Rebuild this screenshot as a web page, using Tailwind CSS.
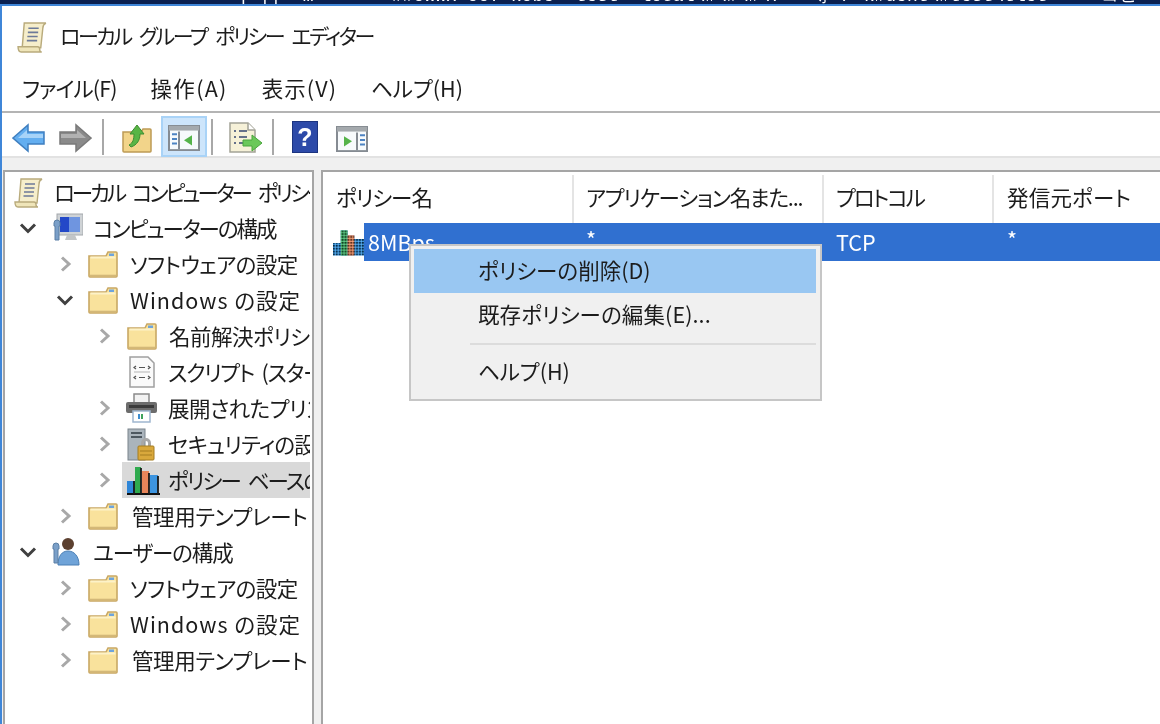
<!DOCTYPE html>
<html lang="ja">
<head>
<meta charset="utf-8">
<script src="https://cdn.jsdelivr.net/npm/@tailwindcss/browser@4"></script>
<title>ローカル グループ ポリシー エディター</title>
</head>
<body class="m-0">
<svg class="absolute w-0 h-0" aria-hidden="true">
  <defs>
    <symbol id="folder" viewBox="0 0 30 28">
      <path d="M1 6h17l2-4h8a1 1 0 0 1 1 1v23a1 1 0 0 1-1 1H2a1 1 0 0 1-1-1z" fill="#f9e29c" stroke="#c9a864" stroke-width="1.6"/>
      <path d="M2.500 7.500h25" stroke="#fdf2c8" stroke-width="2"/>
      <rect x="21" y="3.500" width="5" height="2.500" fill="#6fa4dc"/>
      <path d="M2 25.500h26" stroke="#d3b878" stroke-width="1.600"/>
    </symbol>
    <symbol id="open" viewBox="0 0 20 20"><path d="M7 3.500l7 6.500-7 6.500" fill="none" stroke="#a8a8a8" stroke-width="3"/></symbol>
    <symbol id="down" viewBox="0 0 20 20"><path d="M3 6.500l7 7 7-7" fill="none" stroke="#404040" stroke-width="3"/></symbol>
    <symbol id="scroll" viewBox="0 0 30 32">
      <path d="M7 3h21c-2 1-3 3-3 5l-2 19H5z" fill="#f6eecb" stroke="#b9ab7c" stroke-width="1.400"/>
      <path d="M1 26h19c1 0 2 1 2 2.500S23 31 24 31H4c-2 0-3-2-3-5z" fill="#efe5b9" stroke="#b9ab7c" stroke-width="1.400"/>
      <path d="M11 8h10M10.500 12h10M10 16h10M9.500 20h10" stroke="#6d7a99" stroke-width="1.500"/>
    </symbol>
    <pattern id="dots" width="3" height="3" patternUnits="userSpaceOnUse"><rect x="0" y="0" width="1.700" height="1.700" fill="#000" opacity=".75"/><rect x="1.700" y="1.700" width="1.300" height="1.300" fill="#fff" opacity=".3"/></pattern>
  </defs>
</svg>

<div class="relative w-[1160px] h-[724px] overflow-hidden bg-white flex flex-col text-[#1c1c1c] font-['Noto_Sans_CJK_JP','Noto_Sans',sans-serif] [font-feature-settings:'palt'] text-[21.500px] blur-[0.6px]">

  <!-- strip of the window behind -->
  <div class="h-[6px] shrink-0 bg-[#0a2050] border-b-2 border-[#3f86d8] overflow-hidden relative text-white font-['Liberation_Mono',monospace] text-[18px] leading-[18px] whitespace-pre">
    <span class="absolute left-[238px] -top-[13px]">| ||  m</span>
    <span class="absolute left-[392px] -top-[13px]">##owwx=oo?=kobe  test  local\#\#\#\?   等 / k#dent\#test\tlet  =  コヒ</span>
  </div>

  <div class="flex-1 min-h-0 flex flex-col border-l-2 border-[#3f86d8]">
    <!-- title -->
    <div class="h-[62px] shrink-0 flex items-center pl-[15px] gap-[12px]">
      <svg class="w-[31px] h-[33px] -mt-[1px]"><use href="#scroll"/></svg>
      <span class="whitespace-nowrap text-[21px] -mt-[3px] tracking-[-2.400px] [word-spacing:6px]">ローカル グループ ポリシー エディター</span>
    </div>
    <!-- menu -->
    <div class="h-[43px] shrink-0 flex items-center pl-[20px] gap-[34px] border-b-2 border-[#b4b4b4] box-content">
      <span class="whitespace-nowrap -mt-[2px] tracking-[-0.900px]">ファイル(F)</span>
      <span class="whitespace-nowrap -mt-[2px] tracking-[1.300px]">操作(A)</span>
      <span class="whitespace-nowrap -mt-[2px] tracking-[1.100px]">表示(V)</span>
      <span class="whitespace-nowrap -mt-[2px]">ヘルプ(H)</span>
    </div>
    <!-- toolbar -->
    <div class="h-[45px] shrink-0 flex items-center border-b-2 border-[#e2e2e2] pl-[10px] pt-[4px]">
      <svg class="w-[34px] h-[30px] mt-[3px]" viewBox="0 0 34 30"><path d="M1 15L16 2v7h16v12H16v7z" fill="#63aef0" stroke="#3f7fc0" stroke-width="1.500"/><path d="M6 15L15 7v4h16v4H6z" fill="#a7d3f8"/></svg>
      <svg class="w-[34px] h-[30px] ml-[12px] mt-[3px]" viewBox="0 0 34 30"><path d="M33 15L18 2v7H2v12h16v7z" fill="#8a8a8a" stroke="#7a7a7a" stroke-width="1.500"/><path d="M28 15L19 7v4H3v4h25z" fill="#b2b2b2"/></svg>
      <div class="w-[2px] h-[36px] bg-[#a8a8a8] ml-[10px] mt-[1px]"></div>
      <svg class="w-[30px] h-[32px] ml-[18px] mt-[2px]" viewBox="0 0 30 32"><path d="M1 10h18l2-3h7a1 1 0 0 1 1 1v21a1 1 0 0 1-1 1H2a1 1 0 0 1-1-1z" fill="#f2d48a" stroke="#bd9a55" stroke-width="1.500"/><path d="M7 23c4-2 5-6 5-11H8l7-9 7 9h-4c0 6-3 11-9 13z" fill="#58b545" stroke="#3d8d30" stroke-width="1"/></svg>
      <div class="ml-[9px] w-[46px] h-[41px] bg-[#cde5fb] border-2 border-[#a9d3f7] flex items-center justify-center">
        <svg class="w-[32px] h-[26px] mt-[3px]" viewBox="0 0 32 28" preserveAspectRatio="none"><rect x="1" y="1" width="30" height="26" fill="#f7fafc" stroke="#858b92" stroke-width="2"/><rect x="1" y="1" width="30" height="5" fill="#a4a9ad"/><path d="M11 7v19" stroke="#858b92" stroke-width="2"/><path d="M4 10h5M4 15h5M4 20h5" stroke="#4d83c2" stroke-width="2.200"/><path d="M24 11v11l-8-5.500z" fill="#55b34a"/></svg>
      </div>
      <div class="w-[2px] h-[36px] bg-[#a8a8a8] ml-[4px] mt-[1px]"></div>
      <svg class="w-[34px] h-[32px] ml-[16px] mt-[2px]" viewBox="0 0 34 32"><path d="M1 1h18l7 7v22H1z" fill="#f6f1d8" stroke="#a3a396" stroke-width="1.500"/><path d="M19 1v7h7" fill="#fff" stroke="#a3a396" stroke-width="1.500"/><path d="M5 9h2M10 9h8M5 15h2M10 15h8M5 21h2M10 21h6" stroke="#65708a" stroke-width="1.800"/><path d="M14 18h9v-5l10 8-10 8v-5h-9z" fill="#6bc85a" stroke="#4aa53c" stroke-width="1"/></svg>
      <div class="w-[2px] h-[36px] bg-[#a8a8a8] ml-[9px] mt-[1px]"></div>
      <div class="ml-[18px] w-[26px] h-[32px] mt-[1px] bg-[#2d4aa8] border border-[#1c3480] flex items-center justify-center text-white text-[25px] leading-none font-bold font-['Liberation_Sans',sans-serif]">?</div>
      <svg class="w-[32px] h-[26px] ml-[18px] mt-[4px]" viewBox="0 0 32 28" preserveAspectRatio="none"><rect x="1" y="1" width="30" height="26" fill="#f7fafc" stroke="#858b92" stroke-width="2"/><rect x="1" y="1" width="30" height="5" fill="#a4a9ad"/><path d="M21 7v19" stroke="#858b92" stroke-width="2"/><path d="M24 10h5M24 15h5M24 20h5" stroke="#4d83c2" stroke-width="2.200"/><path d="M8 11v11l8-5.500z" fill="#55b34a"/></svg>
    </div>
    <!-- strip above panes -->
    <div class="h-[12px] shrink-0 bg-[#f0f0f0]"></div>

    <!-- panes -->
    <div class="flex-1 min-h-0 flex bg-[#f0f0f0] pl-[1px]">
      <!-- tree -->
      <div class="w-[311px] shrink-0 bg-white border-2 border-[#a5a5a5] border-b-0 pt-[2px] pr-[2px]">
        <div class="w-[305px] overflow-hidden flex flex-col">
          <div class="h-9 flex items-center pl-[9px]"><svg class="w-[30px] h-[32px] mr-[10px] shrink-0"><use href="#scroll"/></svg><span class="whitespace-nowrap tracking-[-3px] [word-spacing:6px]">ローカル コンピューター ポリシー</span></div>

          <div class="h-9 flex items-center pl-[13px]">
            <svg class="w-5 h-5 mr-[13px] shrink-0"><use href="#down"/></svg>
            <svg class="w-[32px] h-[30px] mr-[10px] shrink-0" viewBox="0 0 32 30"><rect x="6" y="1" width="26" height="21" fill="#cfd3d6" stroke="#a4a8ac"/><rect x="9" y="4" width="20" height="15" fill="#2348c8"/><path d="M18 4h11v15H18z" fill="#6f95e0"/><path d="M16 22h8l2 5H14z" fill="#c3c6c8"/><path d="M3 10a3 3 0 0 1 6 0v3H8v14H4V13H3z" fill="#7a9fc8" stroke="#5a7fa5"/></svg>
            <span class="whitespace-nowrap tracking-[-2px]">コンピューターの構成</span>
          </div>

          <div class="h-9 flex items-center pl-[50px]"><svg class="w-5 h-5 mr-[13px] shrink-0"><use href="#open"/></svg><svg class="w-[30px] h-[28px] mr-[12px] shrink-0"><use href="#folder"/></svg><span class="whitespace-nowrap tracking-[-0.600px]">ソフトウェアの設定</span></div>
          <div class="h-9 flex items-center pl-[50px]"><svg class="w-5 h-5 mr-[13px] shrink-0"><use href="#down"/></svg><svg class="w-[30px] h-[28px] mr-[12px] shrink-0"><use href="#folder"/></svg><span class="whitespace-nowrap tracking-[1px]">Windows の設定</span></div>

          <div class="h-9 flex items-center pl-[89px]"><svg class="w-5 h-5 mr-[13px] shrink-0"><use href="#open"/></svg><svg class="w-[30px] h-[28px] mr-[12px] shrink-0"><use href="#folder"/></svg><span class="whitespace-nowrap tracking-[-0.500px]">名前解決ポリシー</span></div>
          <div class="h-9 flex items-center pl-[122px]">
            <svg class="w-[30px] h-[32px] mr-[11px] shrink-0" viewBox="0 0 30 32"><path d="M3 1h18l6 6v24H3z" fill="#fafafa" stroke="#a0a0a0" stroke-width="1.500"/><path d="M9 10l-2 1.500L9 13M21 10l2 1.500L21 13M12 11.500h6M9 20l-2 1.500L9 23M21 20l2 1.500L21 23M12 21.500h6" fill="none" stroke="#555" stroke-width="1.200"/><path d="M7 16h16" stroke="#b5b5b5"/></svg>
            <span class="whitespace-nowrap tracking-[-1.300px] [word-spacing:4px]">スクリプト (スタートアップ)</span>
          </div>
          <div class="h-9 flex items-center pl-[89px]"><svg class="w-5 h-5 mr-[11px] shrink-0"><use href="#open"/></svg>
            <svg class="w-[33px] h-[30px] mr-[10px] shrink-0" viewBox="0 0 33 30"><rect x="9" y="1" width="15" height="9" fill="#f2f2f2" stroke="#8a8a8a" stroke-width="1.500"/><rect x="1" y="9" width="31" height="11" rx="2" fill="#6c6c6c"/><rect x="4" y="12" width="25" height="3" fill="#3b3b3b"/><rect x="8" y="18" width="17" height="11" fill="#fff" stroke="#9fb6cf" stroke-width="1.500"/><path d="M13 21h2v5h-2z" fill="#3d8dd0"/><path d="M16 21h2v5h-2z" fill="#3fa35b"/></svg>
            <span class="whitespace-nowrap tracking-[-0.500px]">展開されたプリンター</span>
          </div>
          <div class="h-9 flex items-center pl-[89px]"><svg class="w-5 h-5 mr-[13px] shrink-0"><use href="#open"/></svg>
            <svg class="w-[30px] h-[33px] mr-[11px] shrink-0" viewBox="0 0 30 33"><rect x="1" y="1" width="17" height="31" fill="#aab4bc" stroke="#7a848c"/><path d="M4 5h11M4 9h11" stroke="#4d5860" stroke-width="2"/><path d="M14 15a5 5 0 0 1 10 0v3h-3v-3a2 2 0 0 0-4 0v3h-3z" fill="#a8a8a8"/><rect x="11" y="18" width="16" height="14" rx="1" fill="#d9a83c" stroke="#a57c20"/><path d="M13 23h12M13 27h12" stroke="#a57c20"/></svg>
            <span class="whitespace-nowrap tracking-[-0.800px]">セキュリティの設定</span>
          </div>
          <div class="h-9 flex items-center pl-[89px] relative">
            <svg class="w-5 h-5 mr-[8px] shrink-0"><use href="#open"/></svg>
            <div class="flex-1 min-w-0 self-stretch bg-[#d9d9d9] flex items-center overflow-hidden pl-[4px]">
              <svg class="w-[34px] h-[32px] mr-[8px] shrink-0" viewBox="0 0 34 32"><path d="M1 17h9v14H1z" fill="#2f86d8"/><path d="M9 3h6v28H9z" fill="#2faa4e"/><path d="M16 7h7v24h-7z" fill="#e8855a"/><path d="M24 11h8v20h-8z" fill="#3d95e0"/><path d="M1 30h33" stroke="#111" stroke-width="2"/><path d="M8 17v13M15 4v26M23 9v21M32 12v18" stroke="#1a1a1a" stroke-width="1.800"/></svg>
              <span class="whitespace-nowrap tracking-[-1.900px] [word-spacing:5px]">ポリシー ベースの QoS</span>
            </div>
          </div>

          <div class="h-9 flex items-center pl-[50px]"><svg class="w-5 h-5 mr-[13px] shrink-0"><use href="#open"/></svg><svg class="w-[30px] h-[28px] mr-[14px] shrink-0"><use href="#folder"/></svg><span class="whitespace-nowrap tracking-[-0.400px]">管理用テンプレート</span></div>

          <div class="h-9 flex items-center pl-[13px]">
            <svg class="w-5 h-5 mr-[13px] shrink-0"><use href="#down"/></svg>
            <svg class="w-[30px] h-[30px] mr-[12px] shrink-0" viewBox="0 0 30 30"><circle cx="17" cy="7" r="6" fill="#5c4030"/><path d="M7 28c0-9 4-14 10-14s11 5 11 14z" fill="#6fa3d8" stroke="#4a7fb5"/><path d="M2 9a3 3 0 0 1 6 0v3H7v14H3V12H2z" fill="#7a9fc8" stroke="#5a7fa5"/></svg>
            <span class="whitespace-nowrap tracking-[-1.100px]">ユーザーの構成</span>
          </div>
          <div class="h-9 flex items-center pl-[50px]"><svg class="w-5 h-5 mr-[13px] shrink-0"><use href="#open"/></svg><svg class="w-[30px] h-[28px] mr-[12px] shrink-0"><use href="#folder"/></svg><span class="whitespace-nowrap tracking-[-0.600px]">ソフトウェアの設定</span></div>
          <div class="h-9 flex items-center pl-[50px]"><svg class="w-5 h-5 mr-[13px] shrink-0"><use href="#open"/></svg><svg class="w-[30px] h-[28px] mr-[12px] shrink-0"><use href="#folder"/></svg><span class="whitespace-nowrap tracking-[1px]">Windows の設定</span></div>
          <div class="h-9 flex items-center pl-[50px]"><svg class="w-5 h-5 mr-[13px] shrink-0"><use href="#open"/></svg><svg class="w-[30px] h-[28px] mr-[14px] shrink-0"><use href="#folder"/></svg><span class="whitespace-nowrap tracking-[-0.400px]">管理用テンプレート</span></div>
        </div>
      </div>

      <!-- list -->
      <div class="flex-1 min-w-0 ml-[7px] bg-white border-l-2 border-t-2 border-[#a5a5a5] flex flex-col">
        <div class="h-[51px] shrink-0 flex pt-[3px]">
          <div class="w-[251px] pl-[13px] pb-[3px] border-r-2 border-[#e4e4e4] flex items-center whitespace-nowrap tracking-[-1px]">ポリシー名</div>
          <div class="w-[250px] pl-[12px] pb-[3px] border-r-2 border-[#e4e4e4] flex items-center whitespace-nowrap tracking-[-1.200px]">アプリケーション名また...</div>
          <div class="w-[170px] pl-[12px] pb-[3px] border-r-2 border-[#e4e4e4] flex items-center whitespace-nowrap tracking-[-2px]">プロトコル</div>
          <div class="flex-1 pl-[13px] pb-[3px] flex items-center whitespace-nowrap tracking-[0.200px]">発信元ポート</div>
        </div>
        <div class="h-[38px] shrink-0 flex">
          <div class="w-[41px] shrink-0 flex items-center pl-[10px]">
            <svg class="w-[31px] h-[30px]" viewBox="0 0 32 30"><path d="M0 16h8V3h7v5h7v4h10v17H0z" fill="#2f8ed8"/><path d="M8 3h7v26H8z" fill="#3fb56a"/><path d="M15 8h7v21h-7z" fill="#e8855a"/><path d="M0 16h8V3h7v5h7v4h10v17H0z" fill="url(#dots)"/></svg>
          </div>
          <div class="flex-1 min-w-0 bg-[#3070d0] text-white flex items-center leading-none">
            <span class="w-[209px] pl-[4px] shrink-0">8MBps</span>
            <span class="w-[250px] pl-[13px] shrink-0 -mt-[6px]">*</span>
            <span class="w-[171px] pl-[13px] shrink-0">TCP</span>
            <span class="-mt-[6px] pl-[13px]">*</span>
          </div>
        </div>
      </div>
    </div>
  </div>

  <!-- context menu -->
  <div class="absolute left-[409px] top-[244px] w-[413px] h-[157px] bg-[#f0f0f0] border-2 border-[#c6c6c6] pt-[3px] pl-[3px] pr-[4px] flex flex-col">
    <div class="h-[44px] shrink-0 bg-[#99c7f2] flex items-center pl-[64px] pb-[2px] whitespace-nowrap">ポリシーの削除(D)</div>
    <div class="h-[44px] shrink-0 flex items-center pl-[64px] pb-[2px] whitespace-nowrap tracking-[0.100px]">既存ポリシーの編集(E)...</div>
    <div class="h-[13px] shrink-0 flex items-center pl-[56px]"><div class="h-[2px] w-full bg-[#dcdcdc]"></div></div>
    <div class="h-[44px] shrink-0 flex items-center pl-[64px] pb-[2px] whitespace-nowrap">ヘルプ(H)</div>
  </div>
</div>
</body>
</html>
